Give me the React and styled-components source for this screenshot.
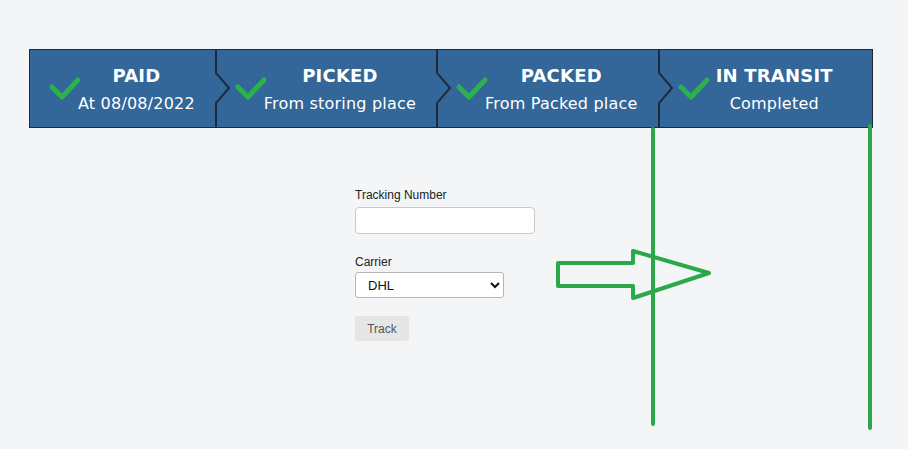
import React from 'react'
import styled, { createGlobalStyle } from 'styled-components'

const GlobalStyle = createGlobalStyle`
  html, body {
    margin: 0;
    padding: 0;
    background: #f3f5f7;
  }
  body {
    font-family: "Liberation Sans", Arial, sans-serif;
  }
`

const Page = styled.div`
  position: relative;
  width: 908px;
  height: 449px;
  padding-top: 49px;
  box-sizing: border-box;
  overflow: hidden;
`

const Stepper = styled.div`
  display: flex;
  width: 844px;
  height: 79px;
  margin-left: 29px;
  box-sizing: border-box;
  border: 1px solid #1f2b3a;
  background: #336699;
`

const Step = styled.div`
  position: relative;
  flex: ${(p) => (p.$last ? '1 1 auto' : 'none')};
  display: flex;
  align-items: center;
  padding: 0 ${(p) => (p.$last ? '30px' : '21px')} 0 18px;
  color: #fff;
  font-family: "DejaVu Sans", "Open Sans", sans-serif;
`

const Chevron = styled.svg`
  position: absolute;
  left: -1px;
  top: 0;
  width: 16px;
  height: 100%;
`

const Check = styled.svg`
  width: 34px;
  height: 30px;
  flex: none;
  margin: -3px -4px 0 0;
`

const Labels = styled.div`
  flex: 1;
  display: flex;
  flex-direction: column;
  align-items: center;
  gap: 8px;
`

const Title = styled.div`
  font-size: 18px;
  font-weight: 700;
  letter-spacing: 0.2px;
`

const Sub = styled.div`
  font-size: 16px;
  font-weight: 400;
  letter-spacing: 0.2px;
`

const Form = styled.form`
  display: flex;
  flex-direction: column;
  align-items: flex-start;
  margin: 60px 0 0 355px;
  font-size: 12px;
  color: #222;
`

const Label = styled.label`
  display: block;
  margin-bottom: ${(p) => (p.$tight ? '3px' : '5px')};
`

const TextInput = styled.input`
  width: 180px;
  height: 27px;
  box-sizing: border-box;
  border: 1px solid #c9c9c9;
  border-radius: 4px;
  background: #fff;
  margin-bottom: 21px;
`

const Select = styled.select`
  width: 149px;
  height: 26px;
  box-sizing: border-box;
  border: 1px solid #b5b5b5;
  border-radius: 3px;
  background: #fff;
  font-family: "Liberation Sans", Arial, sans-serif;
  font-size: 13px;
  padding-left: 8px;
  margin-bottom: 18px;
  color: #111;
`

const Button = styled.button`
  width: 54px;
  height: 25px;
  border: none;
  border-radius: 2px;
  background: #e6e6e6;
  color: #555;
  font-family: "Liberation Sans", Arial, sans-serif;
  font-size: 12px;
`

const Marks = styled.svg`
  position: absolute;
  left: 0;
  top: 0;
  width: 908px;
  height: 449px;
  pointer-events: none;
`

const steps = [
  { title: 'PAID', sub: 'At 08/08/2022' },
  { title: 'PICKED', sub: 'From storing place' },
  { title: 'PACKED', sub: 'From Packed place' },
  { title: 'IN TRANSIT', sub: 'Completed' },
]

function CheckIcon() {
  return (
    <Check viewBox="0 0 34 30">
      <polyline
        points="4,15 14,25 30,8"
        fill="none"
        stroke="#2bb24c"
        strokeWidth="5"
        strokeLinecap="round"
        strokeLinejoin="round"
      />
    </Check>
  )
}

export default function App() {
  return (
    <Page>
      <GlobalStyle />
      <Stepper>
        {steps.map((s, i) => (
          <Step key={s.title} $last={i === steps.length - 1}>
            {i > 0 && (
              <Chevron viewBox="0 0 16 77" preserveAspectRatio="none">
                <polyline
                  points="1,0 1,23 14,38 1,53 1,77"
                  fill="none"
                  stroke="#1f2b3a"
                  strokeWidth="2"
                />
              </Chevron>
            )}
            <CheckIcon />
            <Labels>
              <Title>{s.title}</Title>
              <Sub>{s.sub}</Sub>
            </Labels>
          </Step>
        ))}
      </Stepper>

      <Form onSubmit={(e) => e.preventDefault()}>
        <Label>Tracking Number</Label>
        <TextInput type="text" />
        <Label $tight>Carrier</Label>
        <Select defaultValue="DHL">
          <option>DHL</option>
          <option>UPS</option>
          <option>FedEx</option>
        </Select>
        <Button type="submit">Track</Button>
      </Form>

      <Marks viewBox="0 0 908 449">
        <g fill="none" stroke="#2ba84a" strokeWidth="4" strokeLinejoin="round" strokeLinecap="round">
          <line x1="653" y1="129" x2="653" y2="424" />
          <line x1="870" y1="126" x2="870" y2="428" />
          <polyline points="633,263 558,263 558,286 633,286 633,298 709,273 633,251 633,263" />
        </g>
      </Marks>
    </Page>
  )
}
